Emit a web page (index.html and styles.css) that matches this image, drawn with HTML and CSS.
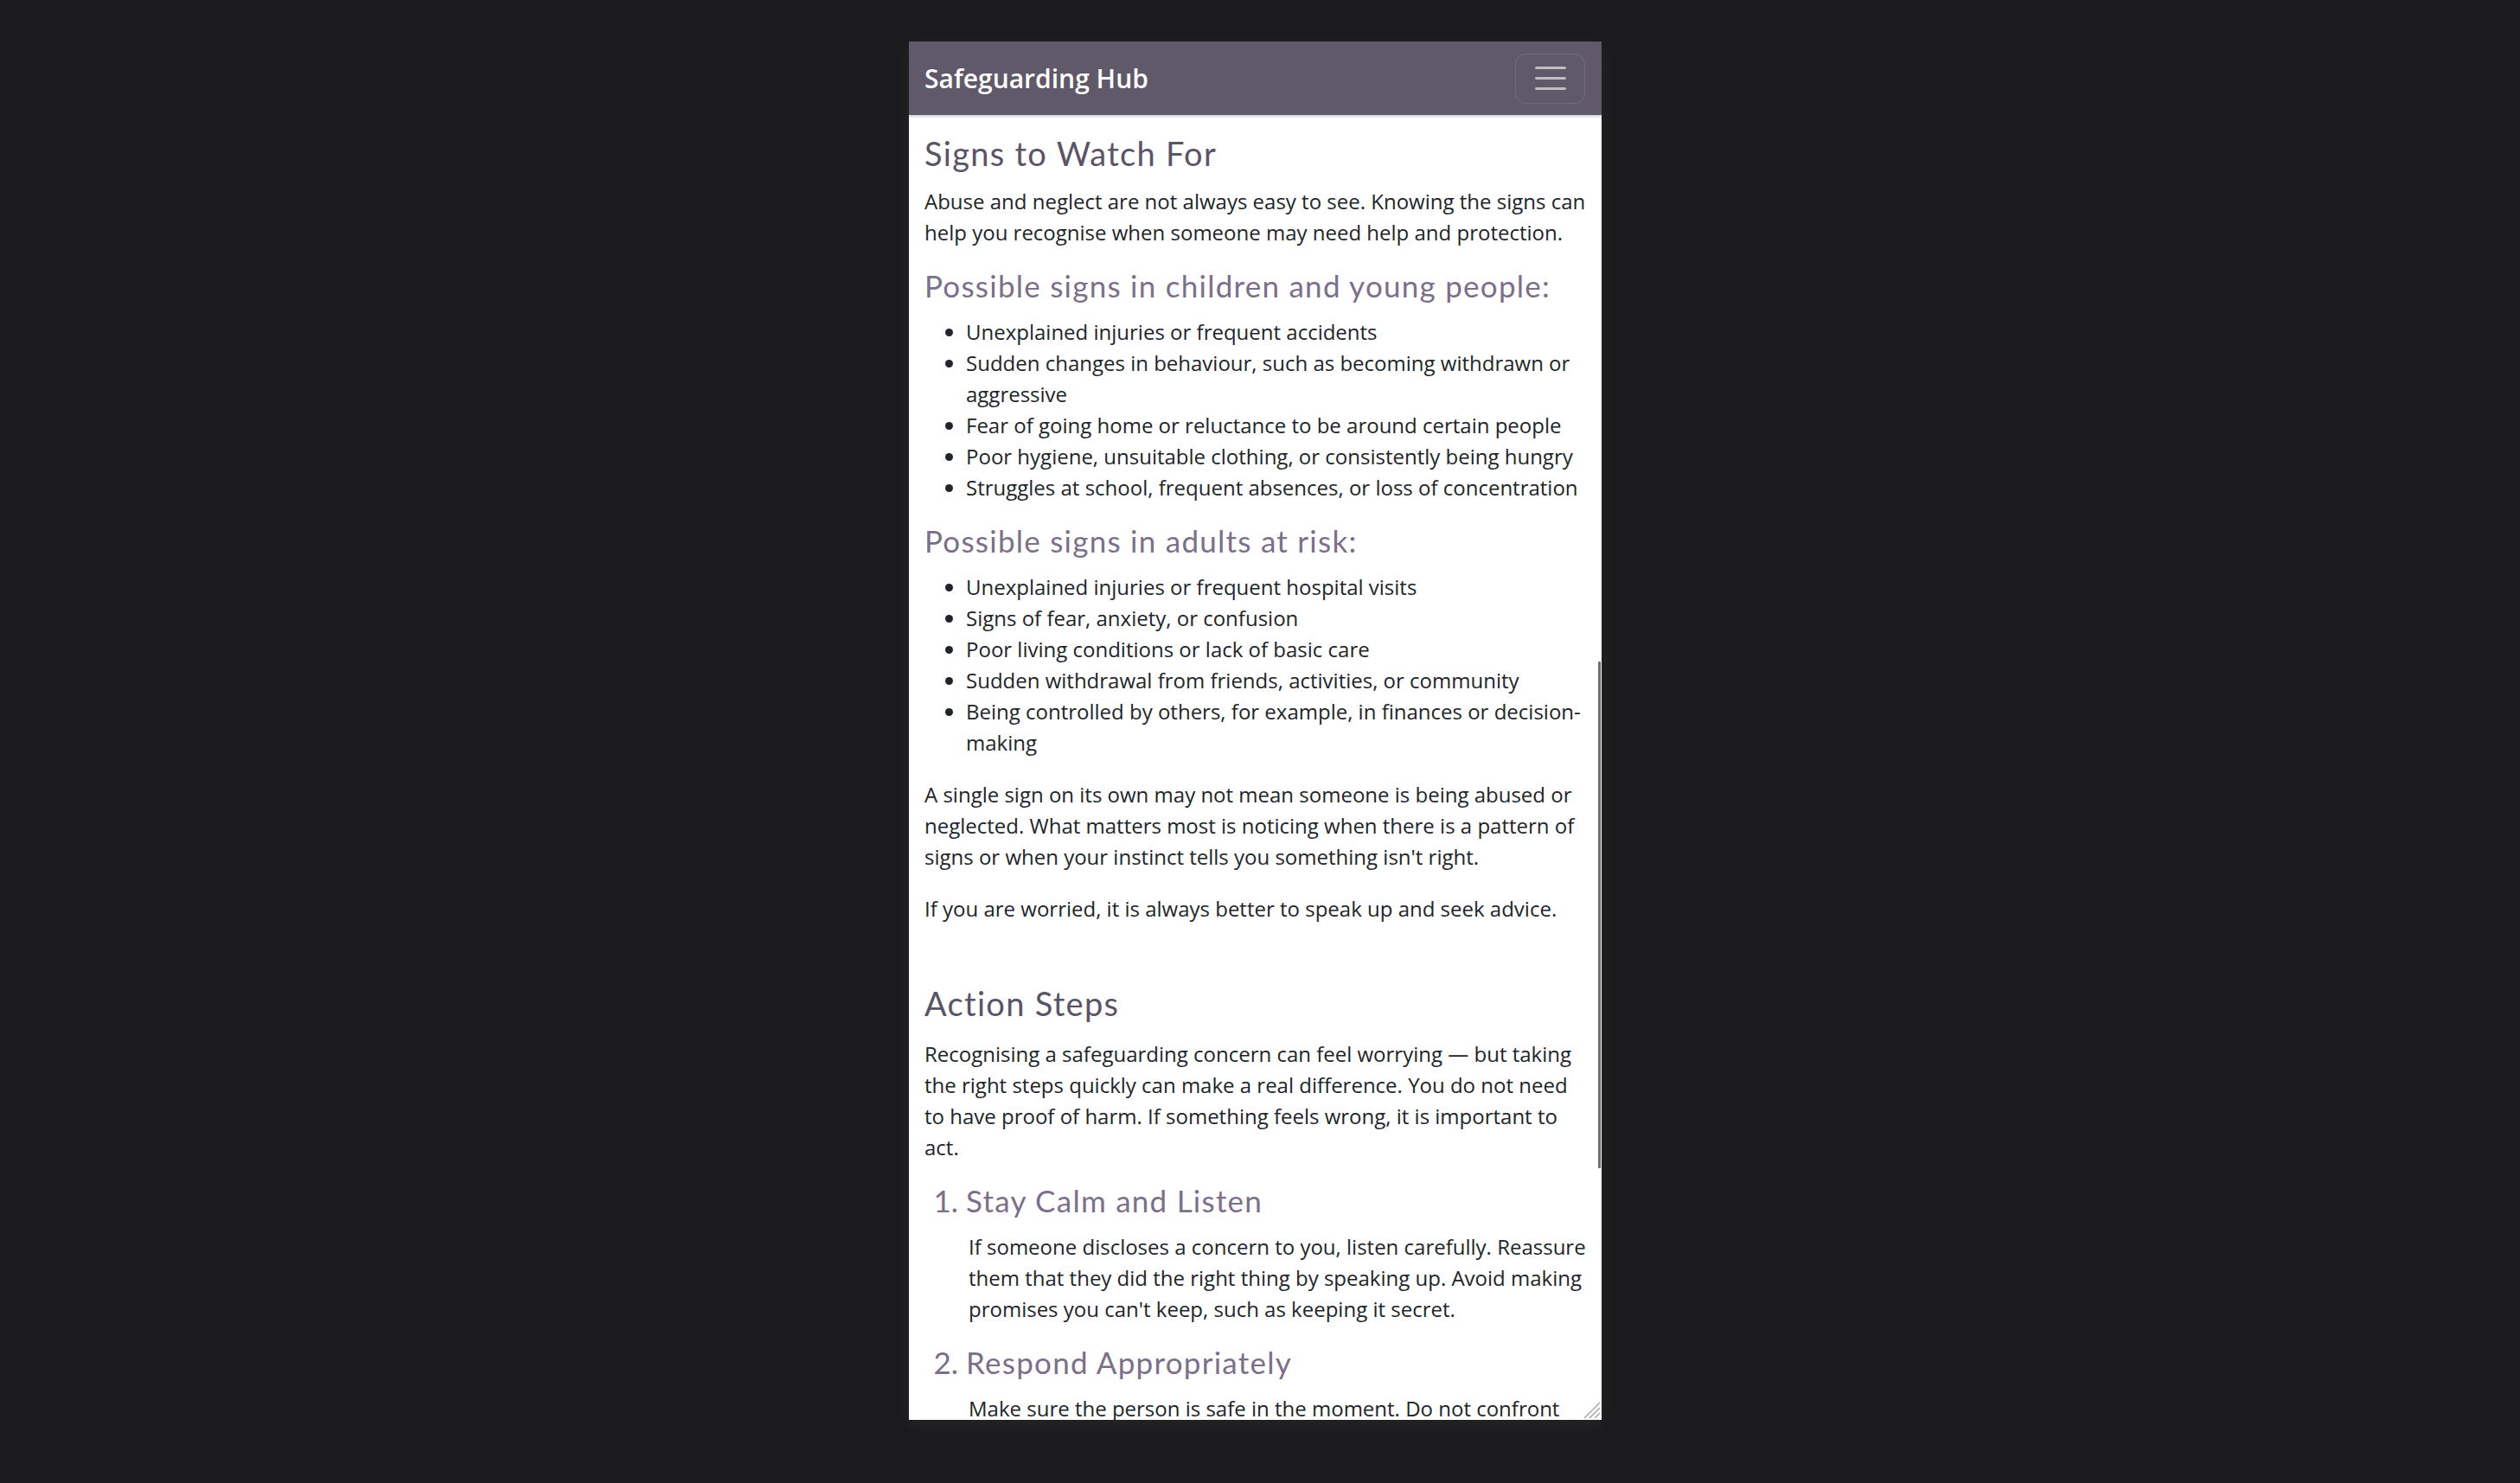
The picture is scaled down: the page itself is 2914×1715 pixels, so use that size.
FILE: index.html
```html
<!DOCTYPE html>
<html lang="en">
<head>
<meta charset="utf-8">
<title>Safeguarding Hub</title>
<link rel="stylesheet" href="styles.css">
</head>
<body>
<div class="stage">
  <div class="device">
    <nav class="navbar">
      <span class="brand">Safeguarding Hub</span>
      <button class="toggler" type="button" aria-label="Toggle navigation">
        <svg class="toggler-icon" width="36" height="27" viewBox="0 0 36 27" aria-hidden="true">
          <path d="M1.5 1.5h33M1.5 13.5h33M1.5 25.5h33" stroke="rgba(255,255,255,0.6)" stroke-width="3" stroke-linecap="round" fill="none"/>
        </svg>
      </button>
    </nav>
    <main class="content">
      <section class="section">
        <h2 class="section-title">Signs to Watch For</h2>
        <p>Abuse and neglect are not always easy to see. Knowing the signs can help you recognise when someone may need help and protection.</p>
        <h3 class="sub-title">Possible signs in children and young people:</h3>
        <ul class="sign-list">
          <li>Unexplained injuries or frequent accidents</li>
          <li>Sudden changes in behaviour, such as becoming withdrawn or aggressive</li>
          <li>Fear of going home or reluctance to be around certain people</li>
          <li>Poor hygiene, unsuitable clothing, or consistently being hungry</li>
          <li>Struggles at school, frequent absences, or loss of concentration</li>
        </ul>
        <h3 class="sub-title">Possible signs in adults at risk:</h3>
        <ul class="sign-list">
          <li>Unexplained injuries or frequent hospital visits</li>
          <li>Signs of fear, anxiety, or confusion</li>
          <li>Poor living conditions or lack of basic care</li>
          <li>Sudden withdrawal from friends, activities, or community</li>
          <li>Being controlled by others, for example, in finances or decision-making</li>
        </ul>
        <p>A single sign on its own may not mean someone is being abused or neglected. What matters most is noticing when there is a pattern of signs or when your instinct tells you something isn't right.</p>
        <p>If you are worried, it is always better to speak up and seek advice.</p>
      </section>
      <section class="section section-steps">
        <h2 class="section-title section-title-steps">Action Steps</h2>
        <p>Recognising a safeguarding concern can feel worrying — but taking the right steps quickly can make a real difference. You do not need to have proof of harm. If something feels wrong, it is important to act.</p>
        <ol class="steps">
          <li>
            <h3 class="sub-title">Stay Calm and Listen</h3>
            <p>If someone discloses a concern to you, listen carefully. Reassure them that they did the right thing by speaking up. Avoid making promises you can't keep, such as keeping it secret.</p>
          </li>
          <li>
            <h3 class="sub-title">Respond Appropriately</h3>
            <p>Make sure the person is safe in the moment. Do not confront the person who may be causing harm. If someone is in immediate danger, call 999.</p>
          </li>
          <li>
            <h3 class="sub-title">Record What You Know</h3>
            <p>Write down what you saw or heard as soon as possible, using the person's own words where you can.</p>
          </li>
        </ol>
      </section>
    </main>
    <div class="scroll-thumb"></div>
    <svg class="resize-grip" width="20" height="20" viewBox="0 0 20 20" aria-hidden="true">
      <path d="M1 19L19 1M7 19L19 7M13 19L19 13" stroke="#a9a9a9" stroke-width="1.6" fill="none"/>
    </svg>
  </div>
</div>
</body>
</html>
```

FILE: styles.css
```css
html, body {
  margin: 0;
  height: 100%;
}

body {
  background: #1b1b1d;
  overflow: hidden;
}

.stage {
  display: flex;
  justify-content: center;
  padding: 48px 11px 0 0;
}

.device {
  position: relative;
  width: 801px;
  height: 1594px;
  flex: none;
  display: flex;
  flex-direction: column;
  background: #ffffff;
  overflow: hidden;
  box-shadow: 0 6px 22px rgba(255, 255, 255, 0.05);
}

.navbar {
  position: relative;
  z-index: 1;
  flex: none;
  height: 85px;
  box-sizing: border-box;
  padding: 0 19px 0 18px;
  display: flex;
  align-items: center;
  justify-content: space-between;
  background: #5f596a;
  box-shadow: 0 2px 3px rgba(0, 0, 0, 0.18);
}

.brand {
  font-family: "Open Sans", "Liberation Sans", sans-serif;
  font-size: 30px;
  line-height: 45px;
  font-weight: 600;
  color: #ffffff;
}

.toggler {
  width: 81px;
  height: 58px;
  box-sizing: border-box;
  padding: 0;
  margin: 0;
  border: 1px solid rgba(255, 255, 255, 0.12);
  border-radius: 12px;
  background: transparent;
  display: flex;
  align-items: center;
  justify-content: center;
}

.toggler-icon {
  display: block;
}

.content {
  flex: 1;
  padding: 21px 16px 0 18px;
  font-family: "Open Sans", "Liberation Sans", sans-serif;
  font-size: 24px;
  line-height: 36px;
  color: #212529;
}

.section-title {
  font-family: Lato, "Open Sans", sans-serif;
  font-size: 38px;
  line-height: 46px;
  font-weight: 400;
  letter-spacing: 1.3px;
  color: #5a5466;
  margin: 0 0 15px;
}

.section-steps {
  margin-top: 68px;
}

.section-title-steps {
  margin-bottom: 18px;
}

.sub-title {
  font-family: Lato, "Open Sans", sans-serif;
  font-size: 35px;
  line-height: 38px;
  font-weight: 400;
  letter-spacing: 1.25px;
  color: #7b6f8a;
  margin: 0 0 17px;
}

.content p,
.sign-list,
.steps {
  margin: 0 0 24px;
}

.sign-list,
.steps {
  padding-left: 48px;
}

.steps li::marker {
  font-family: Lato, "Open Sans", sans-serif;
  font-size: 35px;
  color: #7b6f8a;
}

.steps p {
  padding-left: 3px;
}

.scroll-thumb {
  position: absolute;
  top: 717px;
  right: 1px;
  width: 3px;
  height: 586px;
  border-radius: 1px;
  background: #6d6d6d;
}

.resize-grip {
  position: absolute;
  right: 1px;
  bottom: 1px;
  display: block;
}
```
